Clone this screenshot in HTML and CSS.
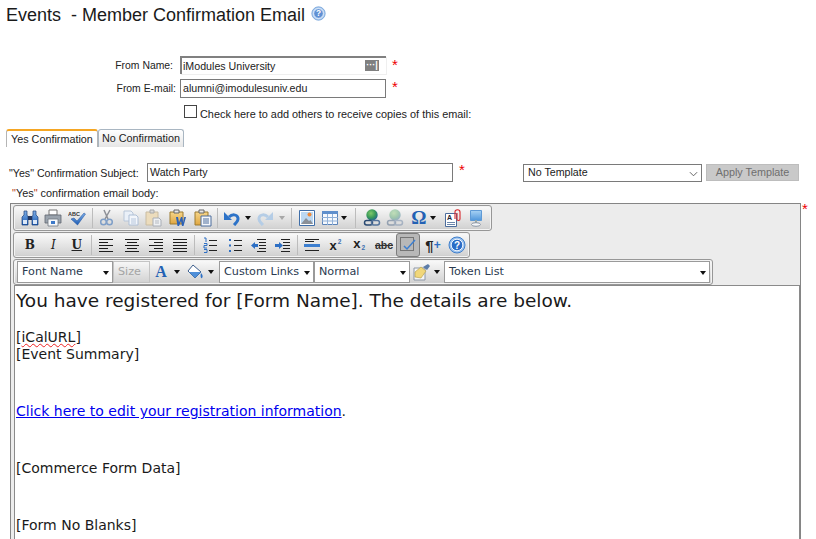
FILE: index.html
```html
<!DOCTYPE html>
<html lang="en">
<head>
<meta charset="utf-8">
<title>Member Confirmation Email</title>
<link rel="stylesheet" href="styles.css">
</head>
<body>
<svg class="defs" width="0" height="0" aria-hidden="true">
  <defs>
    <linearGradient id="clip" x1="0" y1="0" x2="0" y2="1"><stop offset="0" stop-color="#f6d68a"/><stop offset="1" stop-color="#e0a640"/></linearGradient>
    <linearGradient id="blue" x1="0" y1="0" x2="0" y2="1"><stop offset="0" stop-color="#7fb0e8"/><stop offset="1" stop-color="#1d5cb4"/></linearGradient>
    <linearGradient id="screen" x1="0" y1="0" x2="0" y2="1"><stop offset="0" stop-color="#a8d2f4"/><stop offset="1" stop-color="#4f96dc"/></linearGradient>
    <radialGradient id="globe" cx=".4" cy=".35" r=".7"><stop offset="0" stop-color="#7fc86a"/><stop offset=".55" stop-color="#3a9a58"/><stop offset="1" stop-color="#1d5f96"/></radialGradient>
    <symbol id="i-find" viewBox="0 0 18 18">
      <path d="M3 2h3v4l1 2v8H1V8l2-2z" fill="url(#blue)" stroke="#1c3f78" stroke-width=".7"/>
      <path d="M12 2h3v4l2 2v8h-6V8l1-2z" fill="url(#blue)" stroke="#1c3f78" stroke-width=".7"/>
      <path d="M7 7h4v4H7z" fill="#22355e"/><path d="M2 11h4v4H2zM12 11h4v4h-4z" fill="#dbe8f8"/>
    </symbol>
    <symbol id="i-print" viewBox="0 0 18 18">
      <path d="M5 1h8v5H5z" fill="#fff" stroke="#777"/>
      <path d="M1 6h16v8H1z" fill="#9aa3ad" stroke="#5f666e" stroke-width=".8"/>
      <path d="M4 10h10v7H4z" fill="#f6f8fb" stroke="#6e7680" stroke-width=".8"/>
      <path d="M7 12h4v3H7z" fill="#3d79c8"/>
    </symbol>
    <symbol id="i-spell" viewBox="0 0 18 18">
      <text x="0" y="6.500" class="svg-abc">ABC</text>
      <path d="M3 10l3-1 3 3 7-8 1.500 1-8 11z" fill="url(#blue)" stroke="#1d4f9c" stroke-width=".5"/>
    </symbol>
    <symbol id="i-cut" viewBox="0 0 18 18">
      <path d="M6 1l4 9M12 1L7 10" stroke="#8d9097" stroke-width="1.500" fill="none"/>
      <circle cx="5.500" cy="13" r="2.800" fill="none" stroke="#7f9fc8" stroke-width="1.500"/>
      <circle cx="11.500" cy="13" r="2.800" fill="none" stroke="#7f9fc8" stroke-width="1.500"/>
    </symbol>
    <symbol id="i-copy" viewBox="0 0 18 18">
      <path d="M2 2h7l2 2v8H2z" fill="#eaf0f8" stroke="#b8c6d8"/>
      <path d="M7 6h7l2 2v8H7z" fill="#f3f6fb" stroke="#aebfd6"/>
      <path d="M9 10h5M9 12h5M9 14h5" stroke="#b6c6dc"/>
    </symbol>
    <symbol id="i-paste-off" viewBox="0 0 18 18">
      <path d="M1 3h12v13H1z" fill="#ecdcbc" stroke="#c9bca2"/>
      <path d="M5 1h4v3H5z" fill="#d8d8d8" stroke="#aaa"/>
      <path d="M8 9h6l2 2v6H8z" fill="#eef0f3" stroke="#a9aeb6"/>
      <path d="M10 12h4M10 14h4" stroke="#b5bac2"/>
    </symbol>
    <symbol id="i-paste-word" viewBox="0 0 18 18">
      <path d="M1 3h13v12H1z" fill="url(#clip)" stroke="#9c7a30"/>
      <path d="M5 1h5v3H5z" fill="#e8e8e8" stroke="#666"/>
      <path d="M7 8l1.500 9h1.500l2-5 1 5h1.500L17 8h-1.800l-1 5.500-1-5.500H12l-2 5.500L9 8z" fill="#2c62b8"/>
    </symbol>
    <symbol id="i-paste-plain" viewBox="0 0 18 18">
      <path d="M1 3h13v13H1z" fill="url(#clip)" stroke="#9c7a30"/>
      <path d="M5 1h5v3H5z" fill="#e8e8e8" stroke="#666"/>
      <path d="M7 7h10v10H7z" fill="#f4f7fb" stroke="#4c6c9c"/>
      <path d="M9 10h6M9 12h6M9 14h6" stroke="#4c6c9c"/>
    </symbol>
    <symbol id="i-undo" viewBox="0 0 18 18">
      <path d="M6 8c3-3 8-3 9 1 .5 3-2 5-4 7" fill="none" stroke="#2d73c8" stroke-width="3"/>
      <path d="M1 3v8h8z" fill="#2d73c8"/>
    </symbol>
    <symbol id="i-redo" viewBox="0 0 18 18">
      <path d="M12 8c-3-3-8-3-9 1-.5 3 2 5 4 7" fill="none" stroke="#b5cde6" stroke-width="3"/>
      <path d="M17 3v8H9z" fill="#b5cde6"/>
    </symbol>
    <symbol id="i-image" viewBox="0 0 18 18">
      <path d="M1.500 1.500h15v15h-15z" fill="#fff" stroke="#3f6ea8"/>
      <path d="M3 3h12v12H3z" fill="#bcd8f2"/>
      <path d="M3 15l5-6 3 3 1.500-1 2.500 4z" fill="#8a9098"/>
      <circle cx="11.500" cy="5.500" r="2" fill="#ef8a3a"/>
    </symbol>
    <symbol id="i-table" viewBox="0 0 18 18">
      <path d="M1.500 2.500h15v13h-15z" fill="#f6f9fd" stroke="#5a83b8"/>
      <path d="M1 2h16v3H1z" fill="#5f8fcc"/>
      <path d="M1 8.500h16M1 12h16M6.500 5v11M11.500 5v11" stroke="#8fb0d8"/>
    </symbol>
    <symbol id="i-link" viewBox="0 0 18 18">
      <circle cx="9" cy="6" r="5.700" fill="url(#globe)"/>
      <rect x="1.500" y="11.500" width="8" height="4.500" rx="2.200" fill="none" stroke="#2a4a72" stroke-width="1.500"/>
      <rect x="8.500" y="11.500" width="8" height="4.500" rx="2.200" fill="none" stroke="#55749c" stroke-width="1.500"/>
    </symbol>
    <symbol id="i-doc" viewBox="0 0 18 18">
      <path d="M1.500 4.500h11v13h-11z" fill="#fff" stroke="#4c6c9c"/>
      <text x="3" y="11" class="svg-a">A</text>
      <path d="M3 13.500h8M3 15.500h8" stroke="#6c87ac"/>
      <path d="M11 10V3c0-3 5-3 5 0v7c0 2-3 2-3 0V4" fill="none" stroke="#d8262a" stroke-width="1.100"/>
    </symbol>
    <symbol id="i-screen" viewBox="0 0 18 18">
      <path d="M3.500 1.500h11v10h-11z" fill="url(#screen)" stroke="#5f9ad6"/>
      <path d="M8 11h2v3H8z" fill="#9aa"/>
      <ellipse cx="9" cy="15.500" rx="4.500" ry="1.800" fill="#f4f6f9" stroke="#8a95a4"/>
    </symbol>
    <symbol id="i-left" viewBox="0 0 16 16"><path d="M1 2.500h14M1 5.500h9M1 8.500h14M1 11.500h9M1 14.500h14" stroke="#1c1c1c"/></symbol>
    <symbol id="i-center" viewBox="0 0 16 16"><path d="M1 2.500h14M3 5.500h10M1 8.500h14M3 11.500h10M1 14.500h14" stroke="#1c1c1c"/></symbol>
    <symbol id="i-right" viewBox="0 0 16 16"><path d="M1 2.500h14M6 5.500h9M1 8.500h14M6 11.500h9M1 14.500h14" stroke="#1c1c1c"/></symbol>
    <symbol id="i-justify" viewBox="0 0 16 16"><path d="M1 2.500h14M1 5.500h14M1 8.500h14M1 11.500h14M1 14.500h14" stroke="#1c1c1c"/></symbol>
    <symbol id="i-ol" viewBox="0 0 16 16">
      <path d="M2 1h2v4M2 6.500h3v2H2V11h3M2 12.500h3v3H2" fill="none" stroke="#2d6fc4"/>
      <path d="M7 3.500h8M7 8.500h8M7 13.500h8" stroke="#222"/>
    </symbol>
    <symbol id="i-ul" viewBox="0 0 16 16">
      <path d="M2 2h2v2H2zM2 7.500h2v2H2zM2 13h2v2H2z" fill="#2d6fc4"/>
      <path d="M7 3.500h8M7 8.500h8M7 13.500h8" stroke="#222"/>
    </symbol>
    <symbol id="i-outdent" viewBox="0 0 16 16">
      <path d="M6 2.500h9M8 5.500h7M8 8.500h7M8 11.500h7M6 14.500h9" stroke="#222"/>
      <path d="M0 8.500L4 5v2h3v3H4v2z" fill="#2d6fc4"/>
    </symbol>
    <symbol id="i-indent" viewBox="0 0 16 16">
      <path d="M6 2.500h9M8 5.500h7M8 8.500h7M8 11.500h7M6 14.500h9" stroke="#222"/>
      <path d="M8 8.500L4 5v2H0v3h4v2z" fill="#2d6fc4"/>
    </symbol>
    <symbol id="i-hr" viewBox="0 0 16 16">
      <path d="M1 2.500h14M1 4.500h9M1 13.500h14" stroke="#222"/>
      <path d="M0 7h16v3H0z" fill="#3d7fd0"/>
    </symbol>
    <symbol id="i-box" viewBox="0 0 18 18">
      <path d="M1.500 1.500h13v13h-13z" fill="none" stroke="#333" stroke-dasharray="1 1"/>
      <path d="M5 10l3 3 8-9" fill="none" stroke="#3d7fd0" stroke-width="1.500"/>
    </symbol>
    <symbol id="i-help" viewBox="0 0 18 18">
      <circle cx="9" cy="9" r="8" fill="#9cc2ee" stroke="#3f7fcb"/>
      <circle cx="9" cy="9" r="5.800" fill="#2a6cc6" stroke="#eef5fd" stroke-width="1"/>
      <text x="9" y="12.500" text-anchor="middle" class="svg-q">?</text>
    </symbol>
    <symbol id="i-fill" viewBox="0 0 18 18">
      <path d="M7 2l8 7-6 6-7-7z" fill="#fff" stroke="#3d5e8c"/>
      <path d="M3 9l6 6 6-6z" fill="#4f8fd8"/>
      <path d="M15 10c2 2 2 4 1 5s-2-2-1-5z" fill="#2d6fc4"/>
    </symbol>
    <symbol id="i-brush" viewBox="0 0 18 18">
      <path d="M1 5h11v12H1z" fill="#f4f5f7" stroke="#8d97a5"/>
      <path d="M2 9l6-5 5 4-5 7-6-1z" fill="#f1d77a" stroke="#b09a48" stroke-width=".6"/>
      <path d="M10 4l5-3 2 2-3 4z" fill="#5d7da8"/>
    </symbol>
  </defs>
</svg>

<h1 class="title">Events&nbsp; - Member Confirmation Email<svg class="title-help"><use href="#i-help"/></svg></h1>

<form class="sender">
  <div class="row">
    <label class="lbl lbl-name">From Name:</label>
    <div class="input input-name"><span>iModules University</span><span class="dots">···|</span></div>
    <span class="req">*</span>
  </div>
  <div class="row row-email">
    <label class="lbl lbl-email">From E-mail:</label>
    <div class="input input-email">alumni@imodulesuniv.edu</div>
    <span class="req req-email">*</span>
  </div>
  <div class="row row-check">
    <span class="checkbox"></span>
    <span class="check-text">Check here to add others to receive copies of this email:</span>
  </div>
</form>

<div class="tabs">
  <div class="tab tab-on">Yes Confirmation</div>
  <div class="tab">No Confirmation</div>
</div>

<div class="subject">
  <label class="lbl-subject">"Yes" Confirmation Subject:</label>
  <div class="input input-subject">Watch Party</div>
  <span class="req req-subject">*</span>
  <div class="input template"><span>No Template</span><svg class="chev" viewBox="0 0 10 6"><path d="M1 1l4 4 4-4" fill="none" stroke="#555"/></svg></div>
  <div class="apply">Apply Template</div>
</div>

<div class="body-label"><span class="quote">"</span>Yes<span class="quote">"</span> confirmation email body:</div>

<div class="editor-wrap">
  <div class="editor">
    <div class="bar bar-1">
      <span class="b"><svg><use href="#i-find"/></svg></span>
      <span class="b"><svg><use href="#i-print"/></svg></span>
      <span class="b"><svg><use href="#i-spell"/></svg></span>
      <i class="sep"></i>
      <span class="b"><svg><use href="#i-cut"/></svg></span>
      <span class="b"><svg><use href="#i-copy"/></svg></span>
      <span class="b"><svg><use href="#i-paste-off"/></svg></span>
      <span class="b"><svg><use href="#i-paste-word"/></svg></span>
      <span class="b b-plain"><svg><use href="#i-paste-plain"/></svg></span>
      <i class="sep sep-n"></i>
      <span class="b b-undo"><svg><use href="#i-undo"/></svg></span><i class="arr"></i>
      <span class="b"><svg><use href="#i-redo"/></svg></span><i class="arr arr-off"></i>
      <i class="sep"></i>
      <span class="b"><svg><use href="#i-image"/></svg></span>
      <span class="b b-table"><svg><use href="#i-table"/></svg></span><i class="arr arr-in3"></i>
      <i class="sep sep-w"></i>
      <span class="b"><svg><use href="#i-link"/></svg></span>
      <span class="b b-faded"><svg><use href="#i-link"/></svg></span>
      <span class="b omega">Ω</span><i class="arr arr-in2"></i>
      <span class="b ml2"><svg><use href="#i-doc"/></svg></span>
      <span class="b"><svg><use href="#i-screen"/></svg></span>
    </div>
    <div class="bar bar-2">
      <span class="b fmt fmt-b">B</span>
      <span class="b fmt fmt-i">I</span>
      <span class="b fmt fmt-u">U</span>
      <i class="sep sep-5"></i>
      <span class="b w24"><svg class="s16"><use href="#i-left"/></svg></span>
      <span class="b w24 ml2"><svg class="s16"><use href="#i-center"/></svg></span>
      <span class="b w24"><svg class="s16"><use href="#i-right"/></svg></span>
      <span class="b w24"><svg class="s16"><use href="#i-justify"/></svg></span>
      <i class="sep sep-5"></i>
      <span class="b w24 ml1"><svg class="s16"><use href="#i-ol"/></svg></span>
      <span class="b w24 ml1"><svg class="s16"><use href="#i-ul"/></svg></span>
      <span class="b w24"><svg class="s16"><use href="#i-outdent"/></svg></span>
      <span class="b w24"><svg class="s16"><use href="#i-indent"/></svg></span>
      <i class="sep sep-5"></i>
      <span class="b w24"><svg class="s16"><use href="#i-hr"/></svg></span>
      <span class="b w24 script"><span class="x">x</span><sup>2</sup></span>
      <span class="b script script-sub"><span class="x">x</span><sub>2</sub></span>
      <span class="b w24 ml1 strike">abc</span>
      <span class="b w24 b-on"><svg><use href="#i-box"/></svg></span>
      <span class="b w24 ml1 pilcrow">¶<em>+</em></span>
      <span class="b"><svg><use href="#i-help"/></svg></span>
    </div>
    <div class="bar bar-3">
      <span class="sel sel-font">Font Name</span>
      <span class="sel-off">Size</span>
      <span class="b b-color">A</span><i class="arr arr-tight"></i>
      <span class="b b-fill"><svg><use href="#i-fill"/></svg></span><i class="arr arr-tight"></i>
      <span class="sel sel-links">Custom Links</span>
      <span class="sel sel-normal">Normal</span>
      <span class="b b-brush"><svg><use href="#i-brush"/></svg></span><i class="arr arr-in2 arr-tight"></i>
      <span class="sel sel-token">Token List</span>
    </div>
    <div class="content">
      <p class="lead">You have registered for [Form Name]. The details are below.</p>
      <p class="gap-a">[<span class="squiggle">iCalURL</span>]<br>[Event Summary]</p>
      <p class="gap-b"><a href="#" class="mail-link">Click here to edit your registration information</a>.</p>
      <p class="gap-b">[Commerce Form Data]</p>
      <p class="gap-b">[Form No Blanks]</p>
    </div>
  </div>
  <span class="req req-editor">*</span>
</div>
</body>
</html>
```
FILE: styles.css
```css
html, body { margin: 0; padding: 0; height: 539px; overflow: hidden; background: #fff; }
body { font-family: "Liberation Sans", Arial, sans-serif; font-size: 10.670px; color: #222; white-space: nowrap; }
.defs { display: block; height: 0; }
.svg-abc { font: bold 5.500px "Liberation Sans", sans-serif; fill: #333; }
.svg-a { font: bold 7px "Liberation Sans", sans-serif; fill: #223; }
.svg-q { font: bold 10px "Liberation Sans", sans-serif; fill: #fff; }

.title { margin: 0; padding: 5px 0 0 6px; height: 56px; box-sizing: border-box; font-size: 18px; font-weight: normal; line-height: 20px; color: #1a1a1a; display: flex; align-items: flex-start; white-space: pre; }
.title-help { width: 15px; height: 15px; margin: 1px 0 0 6px; opacity: .75; }

.row { display: flex; align-items: center; }
.lbl { display: block; text-align: right; font-size: 10.400px; }
.lbl-name { width: 173px; margin-right: 7px; }
.lbl-email { width: 176px; margin-right: 4px; }
.input { box-sizing: border-box; border: 1px solid #7a7a7a; background: #fff; height: 19px; line-height: 17px; padding: 0 2px; font-size: 10.670px; color: #222; display: flex; justify-content: space-between; align-items: center; }
.input-name { width: 206px; height: 18px; border-width: 2px 0 0 2px; border-color: #808080; box-shadow: 1px 1px 0 #efefef; padding: 0 0 0 1px; }
.input-email { width: 206px; }
.dots { background: #808080; color: #fff; font: bold 9px/11px "Liberation Sans", sans-serif; height: 11px; width: 14px; margin: 0 7px 1px 0; text-align: center; overflow: hidden; }
.row-email { margin-top: 5px; }
.req { color: #e00; font-size: 15px; line-height: 12px; height: 12px; margin: -1px 0 0 6px; }
.req-email { margin-top: -3px; }
.row-check { margin: 7px 0 0 184px; }
.checkbox { box-sizing: border-box; width: 13px; height: 13px; border: 1px solid #444; background: #fff; margin-top: -2px; }
.check-text { margin: 3px 0 0 3px; font-size: 10.900px; }

.tabs { display: flex; margin: 9px 0 0 6px; }
.tab { box-sizing: border-box; height: 18px; padding: 0 3px; line-height: 17px; border: 1px solid #a9b6c2; border-bottom: 0; border-radius: 3px 3px 0 0; background: linear-gradient(#fff, #e6e6e6); width: 86px; font-size: 10.800px; text-align: left; }
.tab-on { width: 92px; border-top: 2px solid #f5a623; border-color: #f5a623 #b5b5b5 transparent #b5b5b5; background: #fff; line-height: 16px; padding-left: 4px; }

.subject { display: flex; align-items: center; margin: 16px 0 0 9px; }
.lbl-subject { width: 138px; font-size: 10.670px; }
.input-subject { width: 306px; }
.req-subject { margin-left: 6px; margin-right: 61px; width: 3px; margin-top: -5px; }
.template { width: 179px; padding: 0 3px 0 4px; height: 18px; }
.chev { width: 9px; height: 6px; margin-top: 2px; }
.apply { box-sizing: border-box; width: 93px; height: 17px; margin-left: 4px; background: #c9c9c9; border: 1px solid #bdbdbd; color: #6e6e6e; font-size: 10.800px; line-height: 15px; text-align: center; }

.body-label { margin: 5px 0 0 12px; line-height: 13px; font-size: 10.900px; }
.quote { color: #b8431c; }

.editor-wrap { display: flex; align-items: flex-start; margin: 3px 0 0 10px; }
.editor { box-sizing: border-box; width: 791px; height: 337px; border: 1px solid #858585; border-bottom: 0; background: #ececec; padding: 1px 0 0 2px; flex: none; }
.req-editor { margin: 0 0 0 1px; }

.bar { box-sizing: border-box; display: flex; align-items: center; height: 26px; width: max-content; margin-bottom: 1px; border: 1px solid #979797; border-radius: 3px; background: linear-gradient(#fafafa, #d4d4d4 90%, #c8c8c8); padding-left: 4px; box-shadow: inset 0 0 0 1px #f3f3f3; }
.bar-1 { width: 479px; }
.bar-2 { width: 457px; margin-top: 1px; }
.bar-3 { width: 700px; padding-left: 3px; margin-bottom: 0; }

.b { flex: none; box-sizing: border-box; width: 23.500px; height: 22px; display: flex; align-items: center; justify-content: center; }
.w24 { width: 24px; }
.ml1 { margin-left: 1px; }
.ml2 { margin-left: 2px; }
.b svg { width: 18px; height: 18px; flex: none; }
.b svg.s16 { width: 16px; height: 16px; }
.b-plain { width: 26px; }
.b-undo { width: 21px; margin-left: 3px; }
.b-faded { opacity: .4; }
.sep { flex: none; width: 7px; height: 20px; background: linear-gradient(#bcbcbc, #bcbcbc) center / 1px 100% no-repeat; }
.sep-n { width: 3px; }
.sep-w { width: 10px; }
.sep-5 { width: 5px; }
.arr { flex: none; width: 11px; height: 22px; }
.arr::before { content: ""; display: block; width: 0; height: 0; margin: 9px 0 0 2px; border: 3.500px solid transparent; border-top: 4px solid #111; border-bottom: 0; }
.arr-off::before { border-top-color: #a8a8a8; }
.arr-tight { width: 10px; }
.arr-in3 { margin-left: -3px; }
.arr-in2 { margin-left: -2.500px; }
.omega { font: bold 19px "Liberation Serif", serif; color: #2361b4; }
.fmt { font: bold 12px "DejaVu Serif", serif; color: #222; }
.fmt-i { font-style: italic; font-weight: normal; }
.fmt-u { text-decoration: underline; }
.script { font: bold 13px "Liberation Sans", sans-serif; color: #222; }
.script sup, .script sub { font-size: 6.500px; color: #3d6fb0; line-height: 8px; }
.script sup { margin: -7px 0 0 1px; }
.script sub { margin: 5px 0 0 1px; }
.script-sub .x { margin-top: -4px; }
.strike { font: bold 10.500px "Liberation Sans", sans-serif; color: #333; text-decoration: line-through; }
.b-on { background: #b8b8b8; border: 1px solid #7d7d7d; border-radius: 3px; height: 24px; }
.pilcrow { font: bold 15px "Liberation Sans", sans-serif; color: #222; }
.pilcrow em { font-style: normal; color: #2d6fc4; font-size: 12px; }

.sel { flex: none; box-sizing: border-box; height: 22px; background: #fff; border: 1px solid #9a9a9a; font: 11.200px/20px "DejaVu Sans", sans-serif; color: #2a3a50; padding-left: 4px; position: relative; }
.sel::after { content: ""; position: absolute; right: 3px; top: 9px; border: 3px solid transparent; border-top: 4px solid #111; border-bottom: 0; }
.sel-font { width: 96px; }
.sel-off { flex: none; box-sizing: border-box; width: 37px; height: 22px; border: 1px solid #c4c4c4; font: 11.200px/20px "DejaVu Sans", sans-serif; color: #a4a4a4; padding-left: 4px; }
.b-color { width: 22px; font: bold 16px "Liberation Serif", serif; color: #2361b4; }
.b-fill { width: 22px; margin-left: 2px; }
.sel-links { width: 95px; margin-left: 3px; }
.sel-normal { width: 96px; }
.b-brush { width: 24px; }
.sel-token { width: 266px; margin-left: 2.500px; }

.content { box-sizing: border-box; width: 786px; height: 254px; margin-left: 1px; background: #fff; border: 1px solid #8a8a8a; border-bottom: 0; padding: 4px 0 0 1px; font: 14px/17px "DejaVu Sans", Verdana, sans-serif; color: #1a1a1a; }
.content p { margin: 0; }
.lead { font-size: 18.500px; line-height: 22px; }
.gap-a { margin-top: 17px !important; }
.gap-b { margin-top: 40px !important; }
.mail-link { color: #00e; }
.squiggle { text-decoration: underline wavy #e22; text-decoration-thickness: 1px; text-decoration-skip-ink: none; }
```
